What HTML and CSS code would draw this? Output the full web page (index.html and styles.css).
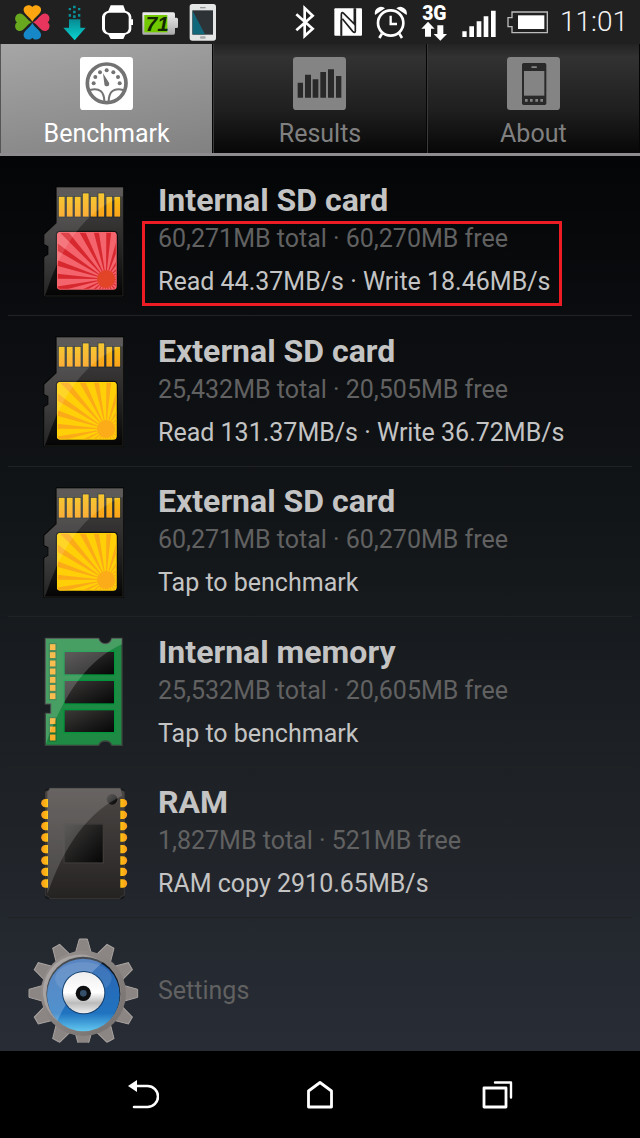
FILE: index.html
```html
<!DOCTYPE html>
<html lang="en">
<head>
<meta charset="utf-8">
<meta name="viewport" content="width=device-width, initial-scale=1">
<title>SD card benchmark</title>
<link rel="stylesheet" href="styles.css">
</head>
<body>
<svg class="defs" width="0" height="0" aria-hidden="true">
  <defs>
    <linearGradient id="case" x1="0" y1="0" x2="0" y2="1"><stop offset="0" stop-color="#4a4746"/><stop offset=".6" stop-color="#242323"/><stop offset="1" stop-color="#040404"/></linearGradient>
    <linearGradient id="gold" x1="0" y1="0" x2="0" y2="1"><stop offset="0" stop-color="#f5bf12"/><stop offset="1" stop-color="#fba21c"/></linearGradient>
    <linearGradient id="pin" x1="0" y1="0" x2="1" y2="0"><stop offset="0" stop-color="#fb9a1e"/><stop offset="1" stop-color="#ffc20e"/></linearGradient>
    <linearGradient id="chip" x1="0" y1="0" x2="1" y2="1"><stop offset="0" stop-color="#3c3a39"/><stop offset="1" stop-color="#050505"/></linearGradient>
    <linearGradient id="body" x1="0" y1="0" x2="0" y2="1"><stop offset="0" stop-color="#4c4745"/><stop offset="1" stop-color="#252322"/></linearGradient>
    <linearGradient id="steel" x1="0" y1="0" x2="1" y2="1"><stop offset="0" stop-color="#999391"/><stop offset="1" stop-color="#746f6d"/></linearGradient>
    <linearGradient id="blue" x1="0" y1="0" x2="0" y2="1"><stop offset="0" stop-color="#2c63b0"/><stop offset=".75" stop-color="#2073c0"/><stop offset="1" stop-color="#62c8ef"/></linearGradient>
    <linearGradient id="hub" x1="0" y1="0" x2="0" y2="1"><stop offset="0" stop-color="#eee"/><stop offset=".5" stop-color="#fff"/><stop offset=".75" stop-color="#bbb"/><stop offset="1" stop-color="#eee"/></linearGradient>
    <linearGradient id="cell" x1="0" y1="0" x2="0" y2="1"><stop offset="0" stop-color="#eee"/><stop offset="1" stop-color="#a9a9a9"/></linearGradient>
    <linearGradient id="teal" x1="0" y1="0" x2="0" y2="1"><stop offset="0" stop-color="#078a92"/><stop offset="1" stop-color="#08d6d2"/></linearGradient>
    <clipPath id="sticker-clip"><rect x="81" y="171" width="179" height="173" rx="9"/></clipPath>
    <clipPath id="case-clip"><path d="M80 37H279V363H43V247L56 239V213L43 207V179L80 144Z"/></clipPath>
    <clipPath id="gear-clip"><rect x="0" y="0" width="400" height="353"/></clipPath>
    <path id="tooth" d="M164 92L178 42H202L216 92Z"/>
    <symbol id="sdcard" viewBox="-18 18 360 360">
      <path d="M80 37H279V363H43V247L56 239V213L43 207V179L80 144Z" fill="url(#case)" stroke="#000" stroke-width="6" stroke-linejoin="round"/>
      <path d="M80 37H279V363H43V247L56 239V213L43 207V179L80 144Z" fill="url(#case)" stroke="#343332" stroke-width="2"/>
      <path d="M81 39H278V56H81Z" fill="#454241"/>
      <g fill="url(#gold)" stroke="#12202c" stroke-width="2">
        <rect x="85" y="64" width="20" height="62"/><rect x="109" y="64" width="20" height="62"/><rect x="133" y="64" width="20" height="62"/><rect x="157" y="54" width="20" height="72"/><rect x="181" y="64" width="20" height="62"/><rect x="204" y="54" width="20" height="72"/><rect x="228" y="64" width="20" height="62"/><rect x="252" y="64" width="20" height="62"/>
      </g>
      <g clip-path="url(#sticker-clip)">
        <rect class="sticker" x="81" y="171" width="179" height="173"/>
        <circle class="rays" cx="228" cy="312" r="130" pathLength="48"/>
        <circle class="sun" cx="228" cy="312" r="27"/>
      </g>
      <rect class="sticker-edge" x="82" y="172" width="177" height="171" rx="8"/>
      <rect x="79" y="169" width="183" height="177" rx="10" fill="none" stroke="#0a0a0a" stroke-width="3"/>
      <path d="M80 37H279V63Q120 125 48 355L43 362V179L80 144Z" fill="#fff" opacity=".13" clip-path="url(#case-clip)"/>
    </symbol>
  </defs>
</svg>

<div class="app">
  <header class="status">
    <div class="status-group">
      <svg class="glyph-wide" viewBox="36 0 120 132" aria-hidden="true">
        <path d="M97 65C90 49 68 42 71 26C74 14 91 12 97 21C103 12 120 14 123 26C126 42 104 49 97 65Z" fill="#fca511"/>
        <path d="M97 65C90 49 68 42 71 26C74 14 91 12 97 21C103 12 120 14 123 26C126 42 104 49 97 65Z" fill="#e8355d" transform="rotate(90 97 67)"/>
        <path d="M97 65C90 49 68 42 71 26C74 14 91 12 97 21C103 12 120 14 123 26C126 42 104 49 97 65Z" fill="#1688c8" transform="rotate(180 97 67)"/>
        <path d="M97 65C90 49 68 42 71 26C74 14 91 12 97 21C103 12 120 14 123 26C126 42 104 49 97 65Z" fill="#67a81f" transform="rotate(270 97 67)"/>
      </svg>
      <svg class="glyph" viewBox="168 0 108 132" aria-hidden="true">
        <path d="M207 58H241V83H257L224 121L190 83H207Z" fill="url(#teal)"/>
        <path d="M219 17h8v8h-8zM206 24h7v7h-7zM234 24h7v7h-7zM219 32h8v8h-8zM206 42h7v8h-7zM219 46h8v8h-8zM234 42h7v8h-7z" fill="#088f96"/>
      </svg>
      <svg class="glyph-wide" viewBox="288 0 120 132" aria-hidden="true">
        <path d="M332 16H370L376 32Q393 36 394 50V58H399V75H394V88Q393 101 376 104L370 117H332L325 104Q308 101 306 87V50Q308 36 325 32Z" fill="#fff"/>
        <rect x="315" y="38" width="71" height="61" rx="14" fill="#1f1f1f"/>
      </svg>
      <svg class="glyph-wide" viewBox="420 0 120 132" role="img" aria-label="Battery 71">
        <path d="M430 37H520Q525 37 525 43V53H530Q534 53 534 58V80Q534 84 530 84H525V98Q525 104 520 104H430Q427 104 427 100V41Q427 37 430 37Z" fill="url(#cell)"/>
        <rect x="433" y="45" width="69" height="52" fill="#73c900"/>
        <text class="cell-level" x="472" y="94" text-anchor="middle">71</text>
      </svg>
      <svg class="glyph" viewBox="552 0 108 132" aria-hidden="true">
        <rect x="569" y="12" width="79" height="110" rx="8" fill="#e4e6e6"/>
        <rect x="577" y="31" width="62" height="73" fill="#2d3237"/><path d="M578 33L615 103H578Z" fill="#12687b"/>
        <path d="M600 23H617" stroke="#999" stroke-width="4"/><rect x="600" y="109" width="17" height="7" rx="3" fill="#a7aaaa"/>
      </svg>
    </div>
    <div class="status-group">
      <svg class="glyph" viewBox="36 0 108 132" aria-hidden="true"><path d="M52 43L101 86L77 108V24L101 47L52 91" fill="none" stroke="#fff" stroke-width="8"/></svg>
      <svg class="glyph" viewBox="156 0 108 132" aria-hidden="true">
        <rect x="166" y="25" width="83" height="82" rx="3" fill="#fff"/>
        <path d="M187 107V44Q187 34 194 40L226 72V25" fill="none" stroke="#202020" stroke-width="5"/>
        <path d="M190 56L221 94Q229 101 229 92V25" fill="none" stroke="#202020" stroke-width="5"/>
        <path d="M187 107V60" fill="none" stroke="#202020" stroke-width="5"/>
      </svg>
      <svg class="glyph-wide" viewBox="276 0 120 132" aria-hidden="true">
        <g fill="none" stroke="#fff"><circle cx="335" cy="69" r="38" stroke-width="8"/><path d="M335 47V72H354" stroke-width="7"/><path d="M309 101L301 114M361 101L369 114" stroke-width="8"/></g>
        <path d="M288 45Q285 29 297 23Q310 17 318 25ZM383 45Q386 29 373 23Q361 17 352 25Z" fill="#fff"/>
      </svg>
      <svg class="glyph-wide" viewBox="408 0 120 132" role="img" aria-label="3G data">
        <text class="network" x="466" y="59" text-anchor="middle">3G</text>
        <path d="M447 65L467 86H456V110H438V86H427ZM484 122L464 102H475V76H493V102H504Z" fill="#fff"/>
      </svg>
      <svg class="glyph-wide" viewBox="540 0 120 132" aria-hidden="true"><path d="M550 94h13v17h-13zM571 79h14v32h-14zM593 64h14v47h-14zM614 49h14v62h-14zM636 32h14v79h-14z" fill="#fff"/></svg>
      <svg class="glyph-battery" viewBox="672 0 144 132" aria-hidden="true"><path d="M699 36H805V98H699V80H687V53H699Z" fill="none" stroke="#bbb" stroke-width="4"/><rect x="717" y="46" width="79" height="41" fill="#fff"/></svg>
      <time class="clock">11:01</time>
    </div>
  </header>

  <nav class="tabs">
    <button class="tab tab-active" type="button" aria-current="page">
      <svg class="tab-icon" viewBox="240 51 159 159" aria-hidden="true">
        <rect x="240" y="51" width="159" height="159" rx="10" fill="#fff"/>
        <circle cx="320" cy="130" r="58" fill="none" stroke="#737373" stroke-width="11"/>
        <g fill="#737373"><circle cx="281" cy="130" r="6"/><circle cx="286" cy="111" r="6"/><circle cx="300" cy="97" r="6"/><circle cx="320" cy="91" r="6"/><circle cx="340" cy="97" r="6"/><circle cx="354" cy="111" r="6"/><circle cx="359" cy="130" r="6"/><path d="M309 100L327 128Q330 137 321 139Q313 139 313 131Z"/></g>
        <path d="M270 150Q312 139 313 184M370 150Q327 139 326 184" fill="none" stroke="#737373" stroke-width="6"/>
      </svg>
      <span>Benchmark</span>
    </button>
    <button class="tab" type="button">
      <svg class="tab-icon" viewBox="0 0 159 159" aria-hidden="true">
        <rect width="159" height="159" rx="10" fill="#848484"/>
        <path d="M14 77h16v45H14zM36 53h18v69H36zM59 67h17v55H59zM82 45h17v77H82zM105 37h18v85h-18zM129 57h16v65h-16z" fill="#292929"/>
      </svg>
      <span>Results</span>
    </button>
    <button class="tab" type="button">
      <svg class="tab-icon" viewBox="561 51 159 159" aria-hidden="true">
        <rect x="561" y="51" width="159" height="159" rx="10" fill="#848484"/>
        <rect x="606" y="69" width="73" height="126" rx="5" fill="#292929"/>
        <rect x="612" y="93" width="61" height="74" fill="#848484"/>
        <rect x="634" y="79" width="17" height="5" rx="2" fill="#848484"/>
        <path d="M615 177h8v8h-8zM630 177h8v8h-8zM646 177h8v8h-8zM661 177h8v8h-8z" fill="#848484"/>
      </svg>
      <span>About</span>
    </button>
  </nav>

  <main class="content">
    <ul class="list">
      <li class="item">
        <button class="row" type="button">
          <svg class="row-icon card-red" aria-hidden="true"><use href="#sdcard"/></svg>
          <span class="text">
            <span class="title">Internal SD card</span>
            <span class="facts facts-marked"><span class="space">60,271MB total · 60,270MB free</span><span class="speed">Read 44.37MB/s · Write 18.46MB/s</span></span>
          </span>
        </button>
      </li>
      <li class="item">
        <button class="row" type="button">
          <svg class="row-icon card-yellow" aria-hidden="true"><use href="#sdcard"/></svg>
          <span class="text">
            <span class="title">External SD card</span>
            <span class="facts"><span class="space">25,432MB total · 20,505MB free</span><span class="speed">Read 131.37MB/s · Write 36.72MB/s</span></span>
          </span>
        </button>
      </li>
      <li class="item">
        <button class="row" type="button">
          <svg class="row-icon card-yellow" aria-hidden="true"><use href="#sdcard"/></svg>
          <span class="text">
            <span class="title">External SD card</span>
            <span class="facts"><span class="space">60,271MB total · 60,270MB free</span><span class="speed">Tap to benchmark</span></span>
          </span>
        </button>
      </li>
      <li class="item">
        <button class="row" type="button">
          <svg class="row-icon" viewBox="-18 23 360 360" aria-hidden="true">
            <path d="M46 42H206Q211 58 226 58Q241 58 245 42H276V363H245Q241 350 226 350Q211 350 206 363H46V267H62V239H46Z" fill="#1f8a43" stroke="#3b463f" stroke-width="4"/>
            <g fill="url(#chip)" stroke="#00953b" stroke-width="4"><rect x="102" y="81" width="152" height="71"/><rect x="102" y="168" width="152" height="71"/><rect x="102" y="256" width="152" height="69"/></g>
            <g fill="#f8ae28" stroke="#176b36" stroke-width="3"><rect x="58" y="58" width="20" height="21"/><rect x="58" y="82" width="20" height="21"/><rect x="58" y="107" width="20" height="21"/><rect x="58" y="131" width="20" height="21"/><rect x="58" y="156" width="20" height="21"/><rect x="58" y="180" width="20" height="21"/><rect x="58" y="205" width="20" height="21"/><rect x="58" y="280" width="20" height="21"/><rect x="58" y="305" width="20" height="21"/><rect x="58" y="329" width="20" height="21"/></g>
            <path d="M46 42H206Q211 58 226 58Q241 58 245 42H276V60Q130 125 48 358V267H62V239H46Z" fill="#fff" opacity=".18"/>
          </svg>
          <span class="text">
            <span class="title">Internal memory</span>
            <span class="facts"><span class="space">25,532MB total · 20,605MB free</span><span class="speed">Tap to benchmark</span></span>
          </span>
        </button>
      </li>
      <li class="item">
        <button class="row" type="button">
          <svg class="row-icon" viewBox="-18 24 360 360" aria-hidden="true">
            <rect x="44" y="40" width="240" height="333" rx="12" fill="#15191c"/>
            <path d="M59 40H271Q271 48 283 50V361Q271 363 269 371H60Q58 363 46 361V50Q59 48 59 40Z" fill="url(#body)" stroke="#494644" stroke-width="2"/>
            <rect x="102" y="147" width="118" height="117" fill="url(#chip)" stroke="#3d3a38" stroke-width="4"/>
            <circle cx="246" cy="73" r="16" fill="url(#chip)"/>
            <g id="pins" fill="url(#pin)"><path d="M54 72V97H46A11 11 0 0 1 46 72Z"/><path d="M54 107V132H46A11 11 0 0 1 46 107Z"/><path d="M54 141V166H46A11 11 0 0 1 46 141Z"/><path d="M54 175V200H46A11 11 0 0 1 46 175Z"/><path d="M54 210V235H46A11 11 0 0 1 46 210Z"/><path d="M54 244V269H46A11 11 0 0 1 46 244Z"/><path d="M54 278V303H46A11 11 0 0 1 46 278Z"/><path d="M54 313V338H46A11 11 0 0 1 46 313Z"/></g>
            <use href="#pins" transform="translate(325 0) scale(-1 1)"/>
            <path d="M59 40H271L277 62Q130 130 52 357V50Q59 48 59 40Z" fill="#fff" opacity=".16"/>
          </svg>
          <span class="text">
            <span class="title">RAM</span>
            <span class="facts"><span class="space">1,827MB total · 521MB free</span><span class="speed">RAM copy 2910.65MB/s</span></span>
          </span>
        </button>
      </li>
      <li class="item item-settings">
        <button class="row" type="button">
          <svg class="row-icon" viewBox="12 15 360 360" aria-hidden="true">
            <g clip-path="url(#gear-clip)">
              <g fill="#8b8583" stroke="#a9a4a1" stroke-width="3">
                <use href="#tooth"/><use href="#tooth" transform="rotate(30 190 205)"/><use href="#tooth" transform="rotate(60 190 205)"/><use href="#tooth" transform="rotate(90 190 205)"/><use href="#tooth" transform="rotate(120 190 205)"/><use href="#tooth" transform="rotate(150 190 205)"/><use href="#tooth" transform="rotate(180 190 205)"/><use href="#tooth" transform="rotate(210 190 205)"/><use href="#tooth" transform="rotate(240 190 205)"/><use href="#tooth" transform="rotate(270 190 205)"/><use href="#tooth" transform="rotate(300 190 205)"/><use href="#tooth" transform="rotate(330 190 205)"/>
              </g>
              <circle cx="190" cy="205" r="128" fill="url(#steel)"/>
              <circle cx="190" cy="205" r="113" fill="#8a8583"/>
              <circle cx="190" cy="206" r="111" fill="#101820"/>
              <circle cx="190" cy="210" r="109" fill="url(#blue)"/>
              <path d="M248 112Q150 200 112 288A109 109 0 0 1 248 112Z" fill="#fff" opacity=".22"/>
              <ellipse cx="190" cy="160" rx="85" ry="48" fill="#fff" opacity=".1"/>
              <circle cx="191" cy="203" r="65" fill="#14406e"/>
              <circle cx="191" cy="203" r="62" fill="url(#hub)"/>
              <circle cx="190" cy="205" r="23" fill="#0c0e10"/><circle cx="190" cy="205" r="10" fill="#35506b"/>
            </g>
          </svg>
          <span class="text"><span class="space">Settings</span></span>
        </button>
      </li>
    </ul>
  </main>

  <footer class="navbar">
    <button class="nav-button" type="button" aria-label="Back">
      <svg class="nav-icon" viewBox="0 0 32 32"><path d="M9 7H20.500A10.500 10.500 0 0 1 20.500 28H7" fill="none" stroke="#fff" stroke-width="2.600" stroke-linecap="round"/><path d="M1 7L10 1V13Z" fill="#fff"/></svg>
    </button>
    <button class="nav-button" type="button" aria-label="Home">
      <svg class="nav-icon" viewBox="0 0 32 32"><path d="M4.500 12L16 3.500L27.500 12V28H4.500Z" fill="none" stroke="#fff" stroke-width="2.800" stroke-linejoin="round"/></svg>
    </button>
    <button class="nav-button" type="button" aria-label="Recent apps">
      <svg class="nav-icon" viewBox="0 0 32 32"><g fill="none" stroke="#fff" stroke-linejoin="round" stroke-linecap="round"><path d="M3 9H25V28H3Z" stroke-width="2.800"/><path d="M14 3.500H30V18.500" stroke-width="2.400"/></g></svg>
    </button>
  </footer>
</div>
</body>
</html>
```
FILE: styles.css
```css
* {
  box-sizing: border-box;
}

body {
  margin: 0;
  background: #000;
  font-family: Roboto, "Noto Sans", sans-serif;
}

button {
  margin: 0;
  padding: 0;
  border: 0;
  background: none;
  color: inherit;
  font: inherit;
}

svg {
  display: block;
  flex: none;
}

.defs {
  position: absolute;
}

.app {
  display: flex;
  flex-direction: column;
  min-height: 100vh;
}

/* Status bar */
.status {
  display: flex;
  justify-content: space-between;
  padding: 0 12px;
  background: #202020;
}

.status-group {
  display: flex;
  align-items: center;
  gap: 4px;
}

.glyph {
  width: 36px;
  height: 44px;
}

.glyph-wide {
  width: 40px;
  height: 44px;
}

.glyph-battery {
  width: 48px;
  height: 44px;
}

.cell-level {
  fill: #112800;
  font: italic 700 62px "Liberation Sans", sans-serif;
}

.network {
  fill: #fff;
  font: 900 58px Roboto, sans-serif;
}

.clock {
  margin-left: 5px;
  color: #f4f4f4;
  font-size: 28px;
  font-weight: 300;
  line-height: 44px;
}

/* Tabs */
.tabs {
  display: grid;
  grid-template-columns: repeat(3, 1fr);
  border-bottom: 3px solid #8e8c8e;
}

.tab {
  display: flex;
  flex-direction: column;
  align-items: center;
  gap: 7px;
  padding: 13px 0 3px;
  border-right: 1px solid #050505;
  border-left: 1px solid #3a3a3a;
  background: linear-gradient(#232323, #323232 12%, #1f1f1f 60%, #070707);
  color: #808080;
  font-size: 25px;
  line-height: 33px;
}

.tab-active {
  border-left-color: #555;
  background: linear-gradient(170deg, #a6a6a6, #818181);
  color: #fff;
}

.tab-icon {
  width: 53px;
  height: 53px;
}

/* Storage list */
.content {
  display: flex;
  flex: 1;
  padding: 10px 8px 0;
  background: linear-gradient(#040507, #121518 40%, #1e2226 70%, #282c35);
}

.list {
  display: flex;
  flex: 1;
  flex-direction: column;
  margin: 0;
  padding: 0;
  list-style: none;
}

.item {
  display: flex;
  flex: 150 0 0;
  border-bottom: 1px solid #202224;
}

.item-settings {
  flex-grow: 133;
  border-bottom: 0;
}

.row {
  display: flex;
  flex: 1;
  align-items: center;
  gap: 14px;
  padding-left: 16px;
  text-align: left;
}

.item-settings .row {
  padding-top: 11px;
}

.row-icon {
  width: 120px;
  height: 120px;
}

.card-red {
  --sticker: #f4646c;
  --ray: #d8282f;
  --sun: #e24427;
}

.card-yellow {
  --sticker: #ffd008;
  --ray: #fcab18;
  --sun: #fbac18;
}

.sticker {
  fill: var(--sticker);
}

.rays {
  fill: none;
  stroke: var(--ray);
  stroke-width: 260;
  stroke-dasharray: 0.8 1.2;
}

.sun {
  fill: var(--sun);
}

.sticker-edge {
  fill: none;
  stroke: var(--sticker);
  stroke-width: 3;
}

.text,
.facts {
  display: flex;
  flex-direction: column;
  align-items: flex-start;
}

.text {
  gap: 2px;
}

.title {
  color: #c4c4c4;
  font-size: 32px;
  font-weight: 700;
  line-height: 38px;
}

.facts {
  position: relative;
  gap: 7px;
  font-size: 25px;
  line-height: 36px;
}

.facts-marked::after {
  position: absolute;
  inset: 0 -12px -6px -16px;
  border: 3px solid #ed1c24;
  content: "";
}

.space {
  color: #616161;
  font-size: 25px;
}

.speed {
  color: #c4c4c4;
}

/* System navigation */
.navbar {
  display: flex;
  padding: 0 54px;
  background: #000;
}

.nav-button {
  display: flex;
  flex: 1;
  align-items: center;
  justify-content: center;
  height: 87px;
}

.nav-icon {
  width: 32px;
  height: 32px;
}
```
